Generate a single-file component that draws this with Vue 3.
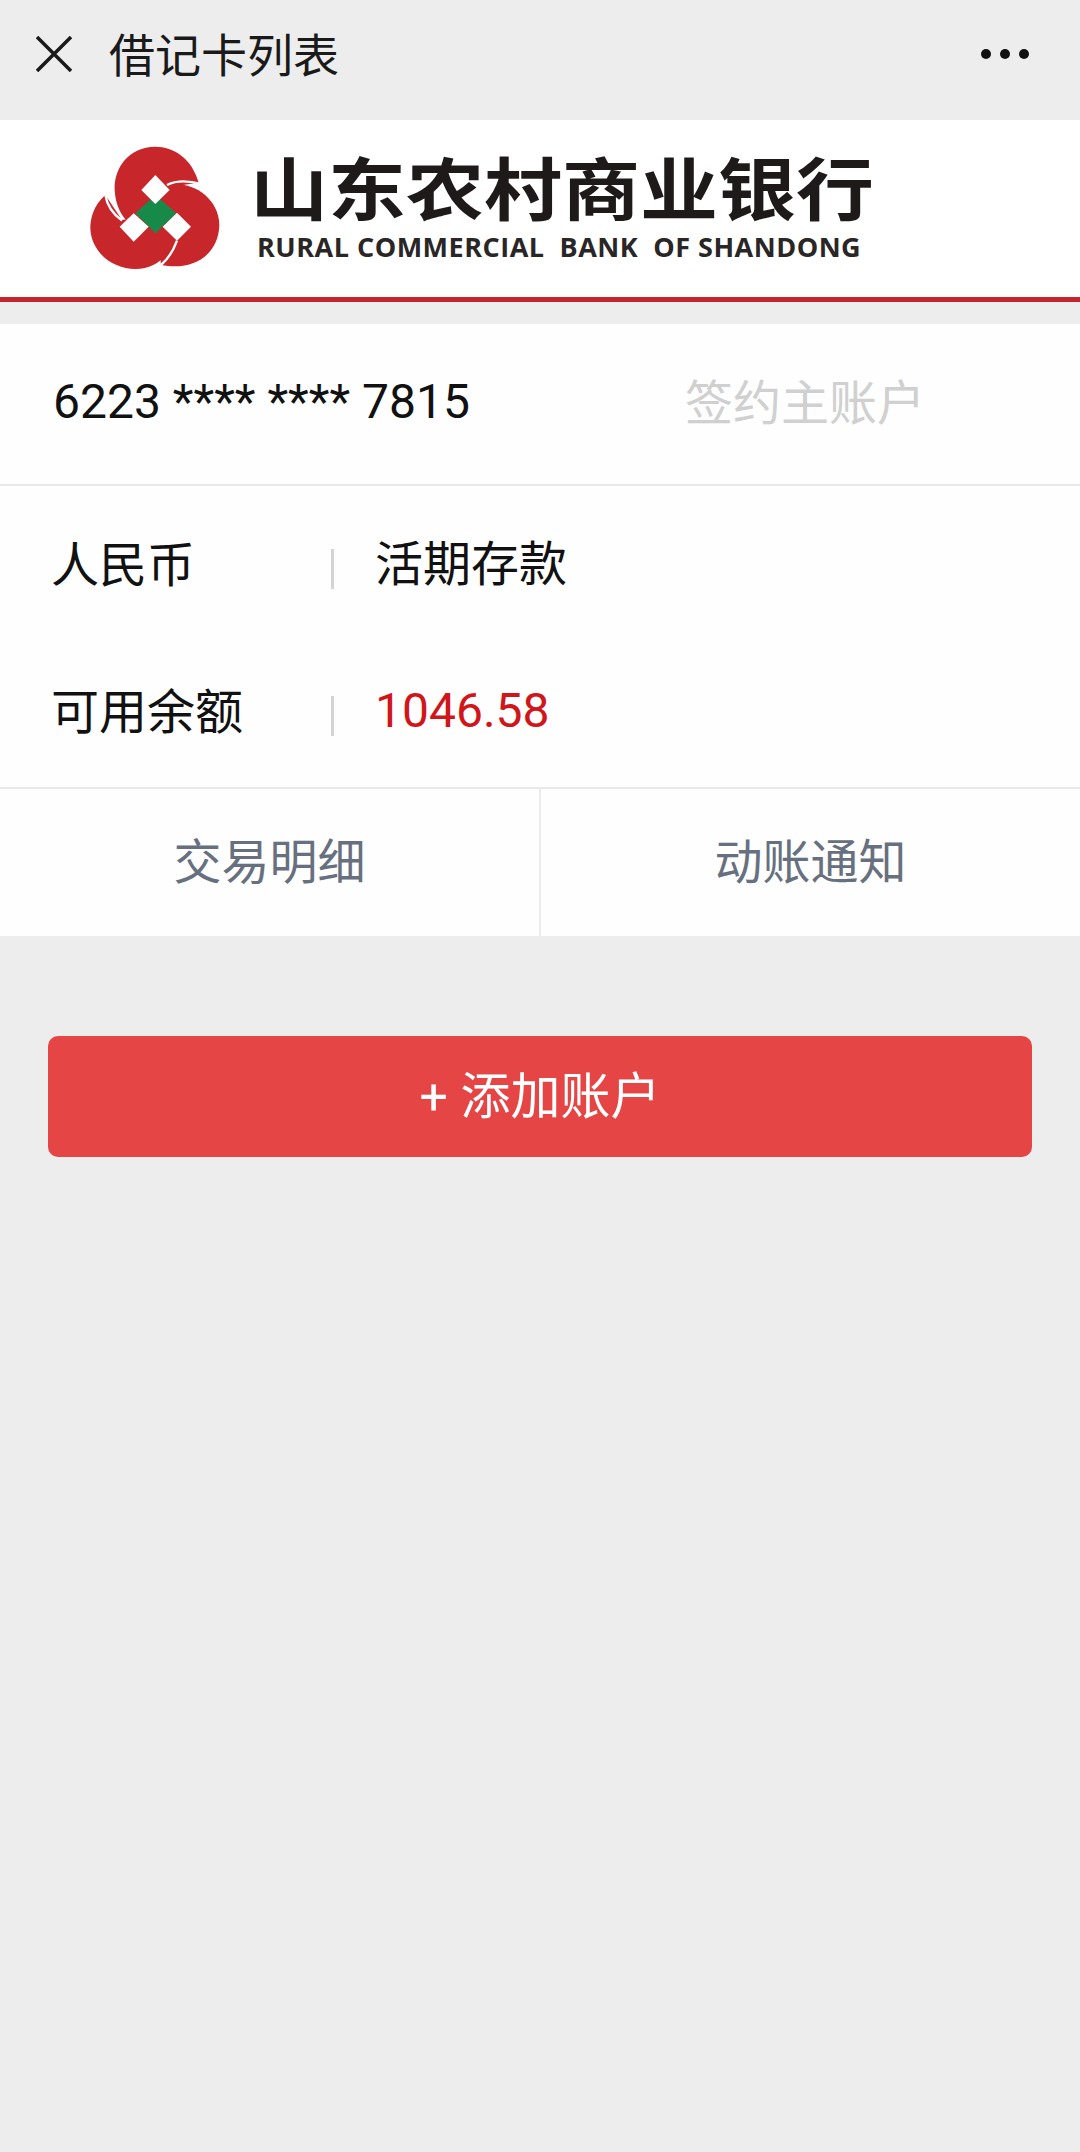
<template>
  <div class="page">
    <header class="topbar">
      <svg class="close" viewBox="0 0 36 36" fill="none" stroke="#1a1a1a" stroke-width="3.5">
        <path d="M1 1 L35 35 M35 1 L1 35" />
      </svg>
      <span class="title">借记卡列表</span>
      <span class="more"><i></i><i></i><i></i></span>
    </header>

    <div class="brand">
      <svg class="mark" viewBox="0 0 538 450">
        <g fill="#c7262b">
          <path d="M385 158 C365 85 310 50 255 50 C175 50 130 115 133 180 C135 215 146 245 165 268 L255 250 L300 170Z" />
          <path d="M290 165 C360 150 445 200 447 285 C445 370 375 425 272 405 L255 250Z" />
          <path d="M105 195 C70 225 60 265 60 295 C63 370 130 417 195 417 C250 417 290 385 310 335 L255 250 L155 270Z" />
        </g>
        <g fill="none" stroke="#fff" stroke-width="7">
          <path d="M290 165 C320 150 355 152 392 162" />
          <path d="M105 195 C110 225 125 250 155 272" />
          <path d="M272 405 C295 385 310 360 320 332" />
        </g>
        <path fill="#178a4a" d="M255 195 L318 250 L255 310 L195 250Z" />
        <g fill="#fff">
          <path d="M255 135 L298 180 L255 222 L213 180Z" />
          <path d="M190 250 L235 290 L190 335 L148 290Z" />
          <path d="M320 248 L362 290 L320 332 L277 290Z" />
        </g>
      </svg>
      <div class="brand-text">
        <div class="brand-cn">山东农村商业银行</div>
        <div class="brand-en">RURAL COMMERCIAL&nbsp; BANK&nbsp; OF SHANDONG</div>
      </div>
    </div>

    <section class="card">
      <div class="card-no">
        <span class="no">{{ card.no }}</span>
        <span class="tag">{{ card.tag }}</span>
      </div>
      <div class="details">
        <div v-for="row in card.rows" :key="row.label" class="row">
          <span class="label">{{ row.label }}</span>
          <span class="sep"></span>
          <span class="value" :class="{ money: row.money }">{{ row.value }}</span>
        </div>
      </div>
      <div class="actions">
        <div v-for="a in actions" :key="a" class="action">{{ a }}</div>
      </div>
    </section>

    <button class="add">+ 添加账户</button>
  </div>
</template>

<script setup>
const card = {
  no: '6223 **** **** 7815',
  tag: '签约主账户',
  rows: [
    { label: '人民币', value: '活期存款' },
    { label: '可用余额', value: '1046.58', money: true },
  ],
}

const actions = ['交易明细', '动账通知']
</script>

<style>
html, body {
  margin: 0;
  background: #ededed;
}
</style>

<style scoped>
.page {
  height: 2152px;
  background: #ededed;
  overflow: hidden;
  font-family: Roboto, "Noto Sans CJK SC", sans-serif;
}

.topbar {
  height: 120px;
  display: flex;
  align-items: center;
  padding: 0 51px 12px 36px;
  box-sizing: border-box;
}

.close {
  width: 36px;
  height: 36px;
  margin-right: 37px;
}

.title {
  font-size: 46px;
  color: #1a1a1a;
  margin-bottom: 4px;
}

.more {
  margin-left: auto;
  display: flex;
  gap: 9px;
}

.more i {
  width: 10px;
  height: 10px;
  border-radius: 50%;
  background: #111;
}

.brand {
  height: 182px;
  background: #fff;
  border-bottom: 5px solid #c4242e;
  box-sizing: border-box;
  display: flex;
  align-items: flex-start;
}

.mark {
  width: 180px;
  height: 150px;
  margin: 10px 0 0 70px;
}

.brand-text {
  margin: 26px 0 0 0;
}

.brand-cn {
  font-size: 78px;
  line-height: 70px;
  font-weight: 700;
  color: #1e1a1a;
  font-family: "Noto Sans CJK SC", sans-serif;
  transform: scaleY(0.88);
  transform-origin: bottom;
}

.brand-en {
  font-family: "Open Sans", sans-serif;
  font-size: 27px;
  line-height: 30px;
  font-weight: 700;
  letter-spacing: 0.5px;
  color: #2a2626;
  margin: 16px 0 0 7px;
  white-space: nowrap;
}

.card {
  margin-top: 22px;
  background: #fefefe;
}

.card-no {
  height: 162px;
  display: flex;
  align-items: center;
  padding-left: 53px;
  border-bottom: 2px solid #e9e9e9;
  box-sizing: border-box;
}

.no {
  font-size: 48px;
  color: #111;
  width: 632px;
  margin-bottom: 6px;
}

.tag {
  font-size: 48px;
  color: #d0d0d0;
  margin-bottom: 10px;
}

.details {
  padding: 5px 0 0;
  height: 303px;
  box-sizing: border-box;
  border-bottom: 2px solid #e9e9e9;
}

.row {
  height: 147px;
  display: flex;
  align-items: center;
  padding-left: 51px;
}

.label {
  width: 280px;
  font-size: 48px;
  color: #111;
  margin-bottom: 8px;
}

.sep {
  width: 3px;
  height: 40px;
  margin-top: 8px;
  background: #d4d4d4;
}

.value {
  margin-left: 41px;
  font-size: 48px;
  color: #111;
  margin-bottom: 10px;
}

.value.money {
  color: #d0161b;
  margin-bottom: 2px;
}

.actions {
  height: 147px;
  display: flex;
}

.action {
  flex: 1;
  display: flex;
  align-items: center;
  justify-content: center;
  padding-bottom: 10px;
  font-size: 48px;
  color: #67707f;
}

.action + .action {
  border-left: 2px solid #ececec;
}

.add {
  display: block;
  width: 984px;
  height: 121px;
  margin: 100px 0 0 48px;
  padding: 0 0 10px;
  border: 0;
  border-radius: 10px;
  background: #e64545;
  color: #fff;
  font-family: inherit;
  font-size: 50px;
}
</style>
